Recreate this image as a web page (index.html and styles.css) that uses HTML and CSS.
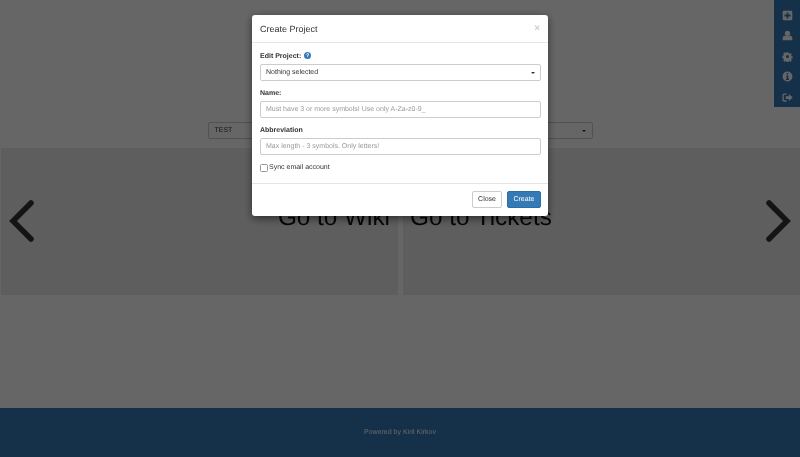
FILE: index.html
```html
<html>
<head>
<meta charset="utf-8">
<title>Create Project</title>
<link rel="stylesheet" href="styles.css">
</head>
<body>
<div class="page">
    <div class="selector">
        <div class="picker">
            <span>TEST</span>
            <span class="caret"></span>
        </div>
    </div>
    <div class="tiles">
        <a class="tile tile_wiki">Go to Wiki</a>
        <a class="tile tile_tickets">Go to Tickets</a>
        <svg class="arrow arrow_left" viewBox="0 0 26 42"><path d="M23 3 L5 21 L23 39"/></svg>
        <svg class="arrow arrow_right" viewBox="0 0 26 42"><path d="M3 3 L21 21 L3 39"/></svg>
    </div>
    <div class="spacer"></div>
    <div class="footer">Powered by Kiril Kirkov</div>
    <ul class="sidebar">
        <li><svg viewBox="0 0 16 16"><path fill-rule="evenodd" d="M3 1h10a2 2 0 0 1 2 2v10a2 2 0 0 1-2 2H3a2 2 0 0 1-2-2V3a2 2 0 0 1 2-2zM6.700 3.500v3.200H3.500v2.600h3.200v3.200h2.600V9.300h3.200V6.700H9.300V3.500z"/></svg></li>
        <li><svg viewBox="0 0 16 16"><circle cx="8" cy="4.800" r="3.800"/><path d="M1 15v-3.200C1 9.600 2.600 8 4.600 8c1 .8 2.100 1.200 3.400 1.200S10.400 8.800 11.400 8c2 0 3.600 1.600 3.600 3.800V15z"/></svg></li>
        <li><svg viewBox="0 0 16 16"><path fill-rule="evenodd" d="M6.600 1h2.800l.4 2 1.300.6 1.800-1.100 2 2-1.100 1.800.6 1.300 2 .4v2.800l-2 .4-.6 1.300 1.100 1.800-2 2-1.800-1.100-1.300.6-.4 2H6.600l-.4-2-1.300-.6-1.800 1.100-2-2 1.100-1.800-.6-1.300-2-.4V6.600l2-.4.6-1.300L1.100 3.100l2-2 1.800 1.100 1.300-.6zM8 5.500a2.500 2.500 0 1 0 0 5 2.500 2.500 0 0 0 0-5z" transform="translate(.8 .8) scale(.9)"/></svg></li>
        <li><svg viewBox="0 0 16 16"><path fill-rule="evenodd" d="M8 .8a7.200 7.200 0 1 1 0 14.400A7.200 7.200 0 0 1 8 .8zM6.800 2.800v2.400h2.400V2.800zM5.800 6.400v1.700h1v3.100h-1v1.800h4.400v-1.800h-1V6.400z"/></svg></li>
        <li><svg viewBox="0 0 16 16"><path d="M6.500 2v2H3.200C2.800 4 2.500 4.300 2.500 4.700v6.600c0 .4.300.7.700.7h3.300v2H3C1.700 14 .6 12.900.6 11.600V4.400C.6 3.100 1.700 2 3 2z"/><path d="M10 3l5.600 5-5.600 5v-3H5.500V6H10z"/></svg></li>
    </ul>
</div>

<div class="backdrop">
    <div class="modal">
        <div class="modal_header">
            <h4>Create Project</h4>
            <span class="close">×</span>
        </div>
        <div class="modal_body">
            <div class="group">
                <label>Edit Project:
                    <svg class="help" viewBox="0 0 16 16"><circle cx="8" cy="8" r="8"/><text x="8" y="12.400">?</text></svg>
                </label>
                <div class="control dropdown">
                    <span>Nothing selected</span>
                    <span class="caret"></span>
                </div>
            </div>
            <div class="group">
                <label for="name">Name:</label>
                <input id="name" class="control" type="text" placeholder="Must have 3 or more symbols! Use only A-Za-z0-9_">
            </div>
            <div class="group">
                <label for="abbr">Abbreviation</label>
                <input id="abbr" class="control" type="text" placeholder="Max length - 3 symbols. Only letters!">
            </div>
            <div class="sync">
                <input id="sync" type="checkbox">
                <span>Sync email account</span>
            </div>
        </div>
        <div class="modal_footer">
            <button class="btn">Close</button>
            <button class="btn btn_primary">Create</button>
        </div>
    </div>
</div>
</body></html>
```

FILE: styles.css
```css
body, html {
    margin: 0;
    padding: 0;
    height: 100%;
    overflow: hidden;
}
body {
    font-family: "Liberation Sans", Arial, sans-serif;
    font-size: 7px;
    line-height: 10px;
    color: #333;
    background: #fff;
    text-rendering: geometricPrecision;
}
.page {
    position: relative;
    display: flex;
    flex-direction: column;
    height: 457px;
    filter: blur(0.4px);
}

.selector {
    display: flex;
    justify-content: center;
    align-items: flex-end;
    padding-bottom: 9px;
    box-sizing: border-box;
    height: 148px;
}
.picker {
    display: flex;
    justify-content: space-between;
    align-items: center;
    box-sizing: border-box;
    width: 385px;
    height: 17px;
    padding: 0 6px;
    border: 1px solid #ccc;
    border-radius: 2px;
}
.caret {
    width: 0;
    height: 0;
    border-top: 2px solid #333;
    border-left: 2px solid transparent;
    border-right: 2px solid transparent;
}

.tiles {
    position: relative;
    display: flex;
    gap: 5px;
    height: 147px;
    padding-left: 1px;
}
.tile {
    display: flex;
    align-items: center;
    box-sizing: border-box;
    background: #ececec;
    color: #111;
    font-size: 24.300px;
    line-height: 28px;
    padding-bottom: 7px;
}
.tile_wiki {
    flex: 0 0 397px;
    justify-content: flex-end;
    padding-right: 8px;
}
.tile_tickets {
    flex: 1;
    padding-left: 7px;
}
.arrow {
    position: absolute;
    top: 52px;
    width: 26px;
    height: 42px;
}
.arrow path {
    fill: none;
    stroke: #333;
    stroke-width: 5.500px;
    stroke-linecap: round;
    stroke-linejoin: miter;
}
.arrow_left {
    left: 8px;
}
.arrow_right {
    right: 8px;
}

.spacer {
    flex: 1;
}
.footer {
    height: 49px;
    background: #337ab7;
    color: #fff;
    text-align: center;
    line-height: 50px;
}

.sidebar {
    position: absolute;
    top: 0;
    right: 0;
    width: 26px;
    height: 107px;
    margin: 0;
    padding: 5px 0 0;
    box-sizing: border-box;
    list-style: none;
    background: #337ab7;
}
.sidebar li {
    display: flex;
    justify-content: center;
    align-items: center;
    height: 20.500px;
}
.sidebar svg {
    width: 11px;
    height: 11px;
    fill: #fff;
}

.backdrop {
    position: fixed;
    top: 0;
    left: 0;
    right: 0;
    bottom: 0;
    background: rgba(0,0,0,0.6);
}
.modal {
    width: 296px;
    margin: 15px auto 0;
    background: #fff;
    border-radius: 3px;
    box-shadow: 0 2.500px 8px rgba(0,0,0,0.5);
    filter: blur(0.3px);
}
.modal_header {
    display: flex;
    justify-content: space-between;
    align-items: center;
    height: 28px;
    padding: 0 8px;
    border-bottom: 1px solid #e5e5e5;
    box-sizing: border-box;
}
.modal_header h4 {
    margin: 0;
    font-size: 9px;
    font-weight: normal;
}
.close {
    color: #ccc;
    font-size: 10px;
    font-weight: bold;
}
.modal_body {
    padding: 8px 7px 0 8px;
    height: 140px;
    box-sizing: border-box;
}
.group {
    margin-bottom: 7.500px;
}
.group label {
    display: block;
    padding-top: 0.500px;
    margin-bottom: 2px;
    font-weight: bold;
}
.help {
    width: 7px;
    height: 7px;
    margin-left: 1px;
    vertical-align: -1px;
    fill: #337ab7;
}
.help text {
    fill: #fff;
    font-size: 12px;
    font-weight: bold;
    text-anchor: middle;
}
.control {
    display: block;
    box-sizing: border-box;
    width: 100%;
    height: 17px;
    margin: 0;
    padding: 0 5px;
    border: 1px solid #ccc;
    border-radius: 2px;
    background: #fff;
    font-family: inherit;
    font-size: 7px;
    color: #333;
    outline: none;
    text-rendering: geometricPrecision;
}
.control::placeholder {
    color: #999;
    opacity: 1;
}
.dropdown {
    display: flex;
    justify-content: space-between;
    align-items: center;
    padding-top: 1px;
}
.sync {
    display: flex;
    align-items: flex-start;
}
.sync input {
    appearance: none;
    box-sizing: border-box;
    width: 8px;
    height: 8px;
    margin: 2px 1px 0 0;
    border: 1px solid #999;
    border-radius: 1.500px;
    background: #fff;
}
.sync span {
    margin-top: 1px;
}
.modal_footer {
    display: flex;
    justify-content: flex-end;
    gap: 5px;
    padding: 7px 7px;
    border-top: 1px solid #e5e5e5;
    box-sizing: border-box;
    height: 33px;
}
.btn {
    height: 17px;
    padding: 0 5px;
    border: 1px solid #ccc;
    border-radius: 2px;
    background: #fff;
    color: #333;
    font-family: inherit;
    font-size: 7px;
    text-rendering: geometricPrecision;
}
.btn_primary {
    padding: 0 5.500px;
    background: #337ab7;
    border-color: #2e6da4;
    color: #fff;
}
```
